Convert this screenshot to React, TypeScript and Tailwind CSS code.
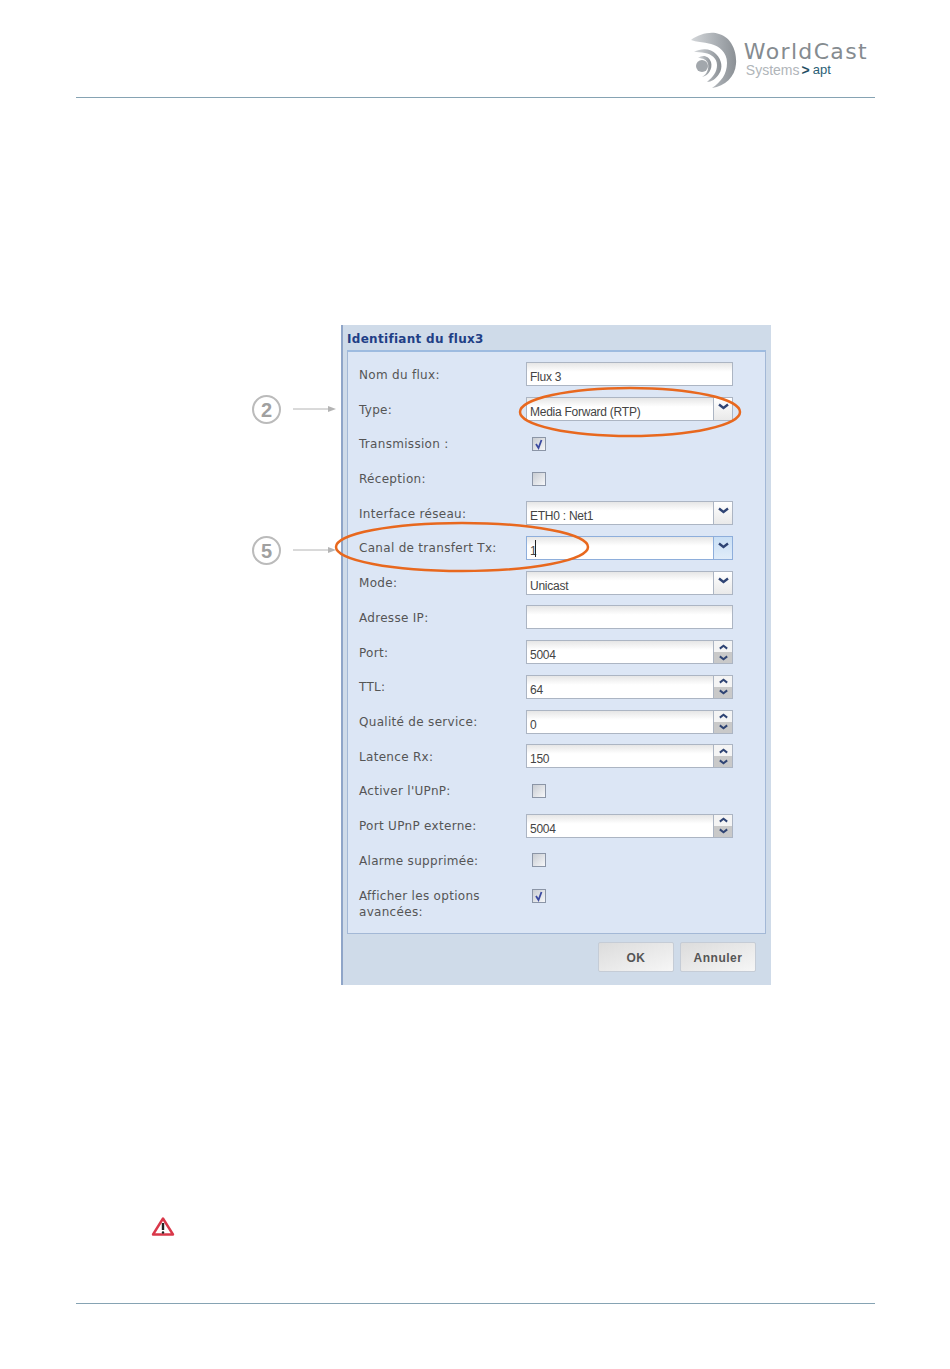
type Row = {
  label: string;
  kind: "text" | "select" | "spin" | "check";
  value?: string;
  checked?: boolean;
  focused?: boolean;
};

const rows: Row[] = [
  { label: "Nom du flux:", kind: "text", value: "Flux 3" },
  { label: "Type:", kind: "select", value: "Media Forward (RTP)" },
  { label: "Transmission :", kind: "check", checked: true },
  { label: "Réception:", kind: "check" },
  { label: "Interface réseau:", kind: "select", value: "ETH0 : Net1" },
  { label: "Canal de transfert Tx:", kind: "select", value: "1", focused: true },
  { label: "Mode:", kind: "select", value: "Unicast" },
  { label: "Adresse IP:", kind: "text", value: "" },
  { label: "Port:", kind: "spin", value: "5004" },
  { label: "TTL:", kind: "spin", value: "64" },
  { label: "Qualité de service:", kind: "spin", value: "0" },
  { label: "Latence Rx:", kind: "spin", value: "150" },
  { label: "Activer l'UPnP:", kind: "check" },
  { label: "Port UPnP externe:", kind: "spin", value: "5004" },
  { label: "Alarme supprimée:", kind: "check" },
];

function Chevron({ up, small }: { up?: boolean; small?: boolean }) {
  return (
    <svg
      width={small ? 9 : 11}
      height={small ? 6 : 7}
      viewBox="0 0 11 7"
      className={up ? "rotate-180" : ""}
    >
      <path d="M1 1.5 L5.5 5 L10 1.5" fill="none" stroke="#2f4474" strokeWidth="2.4" />
    </svg>
  );
}

function Checkbox({ checked }: { checked?: boolean }) {
  return (
    <div className="relative ml-[6px] h-[14px] w-[14px] border border-[#8b95a6] bg-gradient-to-br from-[#c9cdd3] to-[#f6f7f9]">
      {checked && (
        <svg width="12" height="12" viewBox="0 0 12 12" className="absolute left-0 top-0">
          <path d="M3 6 L5.5 10 L8.5 2" fill="none" stroke="#3b4aa0" strokeWidth="1.8" />
        </svg>
      )}
    </div>
  );
}

function Field({ row }: { row: Row }) {
  const border = row.focused ? "border-[#8eaedb]" : "border-[#acb5c3]";
  return (
    <div className={`flex h-[24px] w-[207px] border bg-gradient-to-b from-[#e6e6e6] via-white to-white via-40% ${border}`}>
      <div className="relative flex-1 pl-[3px] pt-[6px] font-['Liberation_Sans',sans-serif] text-[12px] leading-[16px] tracking-[-0.25px] text-[#444]">
        {row.value}
        {row.focused && <span className="absolute left-[8px] top-[3px] h-[17px] w-px bg-[#222]" />}
      </div>
      {row.kind === "select" && (
        <div className={`flex w-[19px] justify-center border-l pt-[5px] ${row.focused ? "border-[#8eaedb] bg-gradient-to-b from-[#c9dff5] to-[#e0ecf9]" : "border-[#acb5c3] bg-gradient-to-b from-white to-[#e9e9e9]"}`}>
          <div className="h-[7px]"><Chevron /></div>
        </div>
      )}
      {row.kind === "spin" && (
        <div className="flex w-[19px] flex-col border-l border-[#acb5c3]">
          <div className="flex h-[11px] items-center justify-center bg-[#f4f4f4]"><Chevron up small /></div>
          <div className="flex flex-1 items-center justify-center bg-[#c9c9c9]"><Chevron small /></div>
        </div>
      )}
    </div>
  );
}

function FormRow({ row }: { row: Row }) {
  return (
    <div className="flex h-[34.72px] items-center">
      <div className="w-[167px] pt-[1px] tracking-[0.3px]">{row.label}</div>
      {row.kind === "check" ? <Checkbox checked={row.checked} /> : <Field row={row} />}
    </div>
  );
}

function Marker({ n, className }: { n: string; className: string }) {
  return (
    <div className={`flex items-center ${className}`}>
      <div className="flex h-[29px] w-[29px] items-center justify-center rounded-full border-2 border-[#bbbbbb] text-[20px] font-bold leading-none text-[#a0a0a0]">
        {n}
      </div>
      <svg width="43" height="8" viewBox="0 0 43 8" className="ml-[12px] mt-[-1px]">
        <path d="M0 4 H36" stroke="#b4b4b4" strokeWidth="1" />
        <path d="M35 1 L43 4 L35 7 Z" fill="#b4b4b4" />
      </svg>
    </div>
  );
}

function Logo() {
  return (
    <div className="flex items-start">
      <svg width="55" height="58" viewBox="0 0 55 58">
        <defs>
          <linearGradient id="sw" x1="0" y1="0" x2="1" y2="0">
            <stop offset="0" stopColor="#d4d7da" />
            <stop offset="0.65" stopColor="#a4a9ae" />
            <stop offset="1" stopColor="#8b9095" />
          </linearGradient>
        </defs>
        <path d="M2 8 C10 2 22 -1 30 2 C44 6 48 22 47 32 C46 45 36 54 23 56 C32 50 38 42 38 31 C38 20 30 14 22 12 C14 10 7 10 2 8 Z" fill="url(#sw)" />
        <path d="M5 20 C12 16 22 16 27 22 C33 28 34 36 30 42 C27 47 22 50 18 50 C24 45 28 40 28 33 C28 26 22 22 16 21 C12 20 8 20 5 20 Z" fill="url(#sw)" />
        <path d="M9 26 C14 22 20 24 22 30 C24 37 19 44 13 45 C18 42 20 37 19 32 C18 28 14 26 9 26 Z" fill="url(#sw)" />
        <circle cx="13" cy="34" r="6" fill="#a2a7ac" />
      </svg>
      <div className="pt-[9px]">
        <div className="text-[22px] leading-[22px] tracking-[1.35px] text-[#858b90] [font-family:'DejaVu_Sans',sans-serif]">
          WorldCast
        </div>
        <div className="flex pl-[2px] text-[14px] leading-[14px] text-[#b0b5b9]">
          Systems
          <span className="ml-[2px] font-bold text-[#1f4e63]">&gt;</span>
          <span className="ml-[3px] text-[13px] text-[#2a6076]">apt</span>
        </div>
      </div>
    </div>
  );
}

export default function App() {
  return (
    <div className="flex h-[1369px] w-[950px] flex-col bg-white font-['Liberation_Sans',sans-serif]">
      <header className="ml-[76px] mr-[75px] flex h-[98px] justify-end border-b border-[#86a3b3] pr-[7px] pt-[32px]">
        <Logo />
      </header>

      <main className="mt-[227px] flex pl-[252px]">
        <div className="flex w-[89px] flex-col">
          <Marker n="2" className="mt-[70px]" />
          <Marker n="5" className="mt-[112px]" />
        </div>

        <div className="relative h-[660px] w-[430px] border-l-2 border-[#8fa5c8] bg-[#cfdbe9]">
          <div className="flex h-[25px] items-center pl-[4px] pt-[2px] text-[12px] font-bold tracking-[0.3px] text-[#1f3f86] [font-family:'DejaVu_Sans',sans-serif]">
            Identifiant du flux3
          </div>
          <div className="ml-[4px] h-[584px] w-[419px] border border-t-2 border-[#a3b8d6] border-t-[#9dbbe0] bg-[#dce6f5] pl-[11px] pt-[5px] text-[12px] leading-[16px] text-[#555] [font-family:'DejaVu_Sans',sans-serif]">
            {rows.map((r) => (
              <FormRow key={r.label} row={r} />
            ))}
            <div className="flex pt-[10px]">
              <div className="w-[167px] tracking-[0.3px]">
                Afficher les options
                <br />
                avancées:
              </div>
              <div className="pt-[1px]">
                <Checkbox checked />
              </div>
            </div>
          </div>
          <div className="mr-[15px] mt-[8px] flex justify-end gap-[6px] text-[12px] font-bold tracking-[0.5px] text-[#555]">
            <button className="h-[30px] w-[76px] rounded-[2px] border border-[#c5ccd6] bg-gradient-to-br from-[#dcdcdc] to-[#f6f6f6] pt-[1px]">OK</button>
            <button className="h-[30px] w-[76px] rounded-[2px] border border-[#c5ccd6] bg-gradient-to-br from-[#dcdcdc] to-[#f6f6f6] pt-[1px]">Annuler</button>
          </div>

          <svg width="430" height="660" viewBox="0 0 430 660" className="pointer-events-none absolute left-[-2px] top-0 overflow-visible">
            <ellipse cx="289" cy="87" rx="110" ry="24" fill="none" stroke="#e8681e" strokeWidth="2.5" />
            <ellipse cx="121" cy="222" rx="126" ry="24" fill="none" stroke="#e8681e" strokeWidth="2.5" />
          </svg>
        </div>
      </main>

      <div className="ml-[151px] mt-[231px] h-[20px]">
        <svg width="24" height="21" viewBox="0 0 24 21">
          <path d="M12 2.5 L22 18.5 H2 Z" fill="white" stroke="#d9384a" strokeWidth="2.4" strokeLinejoin="round" />
          <path d="M12 7 V14" stroke="#222" strokeWidth="2.4" />
          <circle cx="12" cy="16.5" r="1.2" fill="#222" />
        </svg>
      </div>

      <footer className="ml-[76px] mr-[75px] mt-[67px] border-b border-[#86a3b3]" />
    </div>
  );
}
